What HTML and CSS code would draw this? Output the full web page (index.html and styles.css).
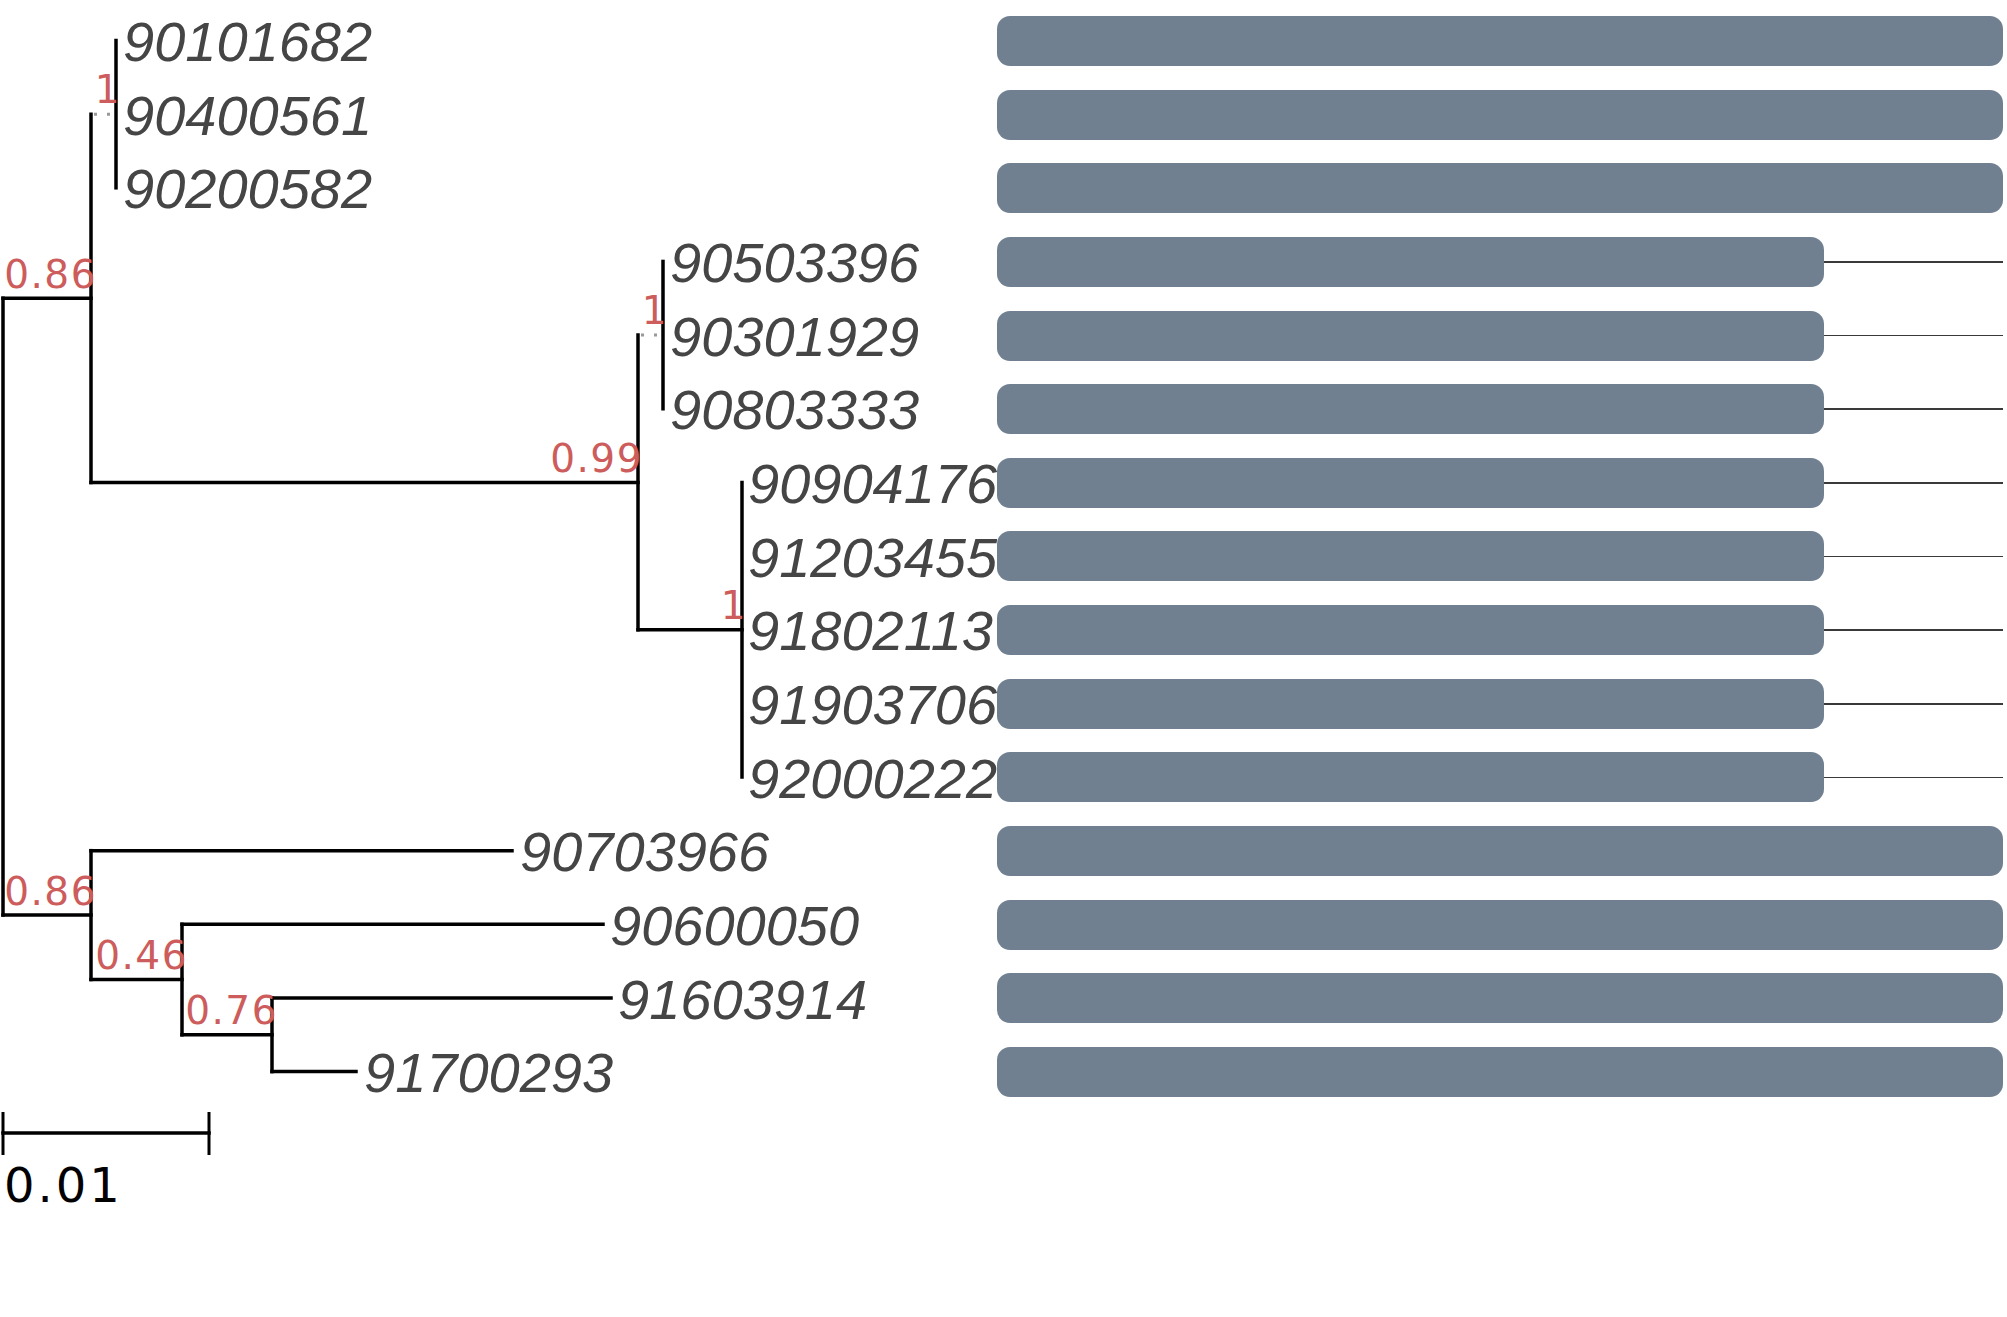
FILE: index.html
```html
<!DOCTYPE html>
<html>
<head>
<meta charset="utf-8">
<title>Tree</title>
<link rel="stylesheet" href="styles.css">
</head>
<body>
<div class="page">
  <div class="tree">
    <svg class="tree-svg" width="997" height="1317" viewBox="0 0 997 1317">
      <!-- branches -->
      <path class="branch" d="M3 298.3 V915.1"/>
      <path class="branch" d="M3 298.3 H91"/>
      <path class="branch" d="M3 915.1 H91"/>
      <path class="branch" d="M91 114.15 V482.4"/>
      <path class="dots" d="M94 114.15 H116"/>
      <path class="branch" d="M116 40.5 V187.8"/>
      <path class="branch" d="M91 482.4 H638"/>
      <path class="branch" d="M638 335.1 V629.7"/>
      <path class="dots" d="M641 335.1 H663"/>
      <path class="branch" d="M663 261.45 V408.75"/>
      <path class="branch" d="M638 629.7 H742"/>
      <path class="branch" d="M742 482.4 V777"/>
      <path class="branch" d="M91 850.65 V979.5"/>
      <path class="branch" d="M91 850.65 H512"/>
      <path class="branch" d="M91 979.5 H182"/>
      <path class="branch" d="M182 924.3 V1034.8"/>
      <path class="branch" d="M182 924.3 H603"/>
      <path class="branch" d="M182 1034.8 H272"/>
      <path class="branch" d="M272 997.95 V1071.6"/>
      <path class="branch" d="M272 997.95 H611"/>
      <path class="branch" d="M272 1071.6 H356"/>

      <!-- support values -->
      <text class="sup" x="97" y="288">0.86</text>
      <text class="sup" x="121" y="103">1</text>
      <text class="sup" x="643" y="472">0.99</text>
      <text class="sup" x="668" y="324">1</text>
      <text class="sup" x="747" y="619">1</text>
      <text class="sup" x="97" y="905">0.86</text>
      <text class="sup" x="188" y="969">0.46</text>
      <text class="sup" x="278" y="1024">0.76</text>

      <!-- leaf labels -->
      <text class="leaf" x="123" y="61">90101682</text>
      <text class="leaf" x="123" y="135">90400561</text>
      <text class="leaf" x="123" y="208">90200582</text>
      <text class="leaf" x="670" y="282">90503396</text>
      <text class="leaf" x="670" y="356">90301929</text>
      <text class="leaf" x="670" y="429">90803333</text>
      <text class="leaf" x="748" y="503">90904176</text>
      <text class="leaf" x="748" y="577">91203455</text>
      <text class="leaf" x="748" y="650">91802113</text>
      <text class="leaf" x="748" y="724">91903706</text>
      <text class="leaf" x="748" y="798">92000222</text>
      <text class="leaf" x="520" y="871">90703966</text>
      <text class="leaf" x="610" y="945">90600050</text>
      <text class="leaf" x="618" y="1019">91603914</text>
      <text class="leaf" x="364" y="1092">91700293</text>

      <!-- scale bar -->
      <path class="branch" d="M3 1133 H209"/>
      <path class="tick" d="M3 1112 V1155"/>
      <path class="tick" d="M209 1112 V1155"/>
      <text class="scale" x="4" y="1202">0.01</text>
    </svg>
  </div>
  <div class="tracks">
    <div class="track"><div class="bar full"></div></div>
    <div class="track"><div class="bar full"></div></div>
    <div class="track"><div class="bar full"></div></div>
    <div class="track"><div class="bar short"></div><div class="link"></div></div>
    <div class="track"><div class="bar short"></div><div class="link"></div></div>
    <div class="track"><div class="bar short"></div><div class="link"></div></div>
    <div class="track"><div class="bar short"></div><div class="link"></div></div>
    <div class="track"><div class="bar short"></div><div class="link"></div></div>
    <div class="track"><div class="bar short"></div><div class="link"></div></div>
    <div class="track"><div class="bar short"></div><div class="link"></div></div>
    <div class="track"><div class="bar short"></div><div class="link"></div></div>
    <div class="track"><div class="bar full"></div></div>
    <div class="track"><div class="bar full"></div></div>
    <div class="track"><div class="bar full"></div></div>
    <div class="track"><div class="bar full"></div></div>
  </div>
</div>
</body>
</html>
```
FILE: styles.css
```css
html, body {
  margin: 0;
  padding: 0;
  background: #ffffff;
}

.page {
  display: flex;
  width: 2007px;
  height: 1317px;
  overflow: hidden;
}

.tree {
  flex: none;
  width: 997px;
  height: 1317px;
}

.tree-svg {
  display: block;
}

.branch {
  fill: none;
  stroke: #000000;
  stroke-width: 3.5;
  stroke-linecap: square;
}

.tick {
  fill: none;
  stroke: #000000;
  stroke-width: 3;
}

.dots {
  fill: none;
  stroke: #999999;
  stroke-width: 3;
  stroke-dasharray: 3 10;
}

.sup {
  font-family: "DejaVu Sans", "Liberation Sans", sans-serif;
  font-size: 39px;
  letter-spacing: 1.5px;
  fill: #cd5c5c;
  text-anchor: end;
}

.leaf {
  font-family: "Liberation Sans", Arial, sans-serif;
  font-style: italic;
  font-size: 56px;
  fill: #454545;
}

.scale {
  font-family: "DejaVu Sans", "Liberation Sans", sans-serif;
  font-size: 48px;
  letter-spacing: 3px;
  fill: #000000;
}

.tracks {
  flex: none;
  width: 1006px;
  display: flex;
  flex-direction: column;
  gap: 23.65px;
  padding-top: 16px;
}

.track {
  display: flex;
  align-items: center;
  height: 50px;
}

.bar {
  flex: none;
  height: 50px;
  border-radius: 13px;
  background: #708090;
}

.bar.full {
  width: 1006px;
}

.bar.short {
  width: 827px;
}

.link {
  flex: 1;
  height: 1.5px;
  background: #3a3a3a;
}
```
